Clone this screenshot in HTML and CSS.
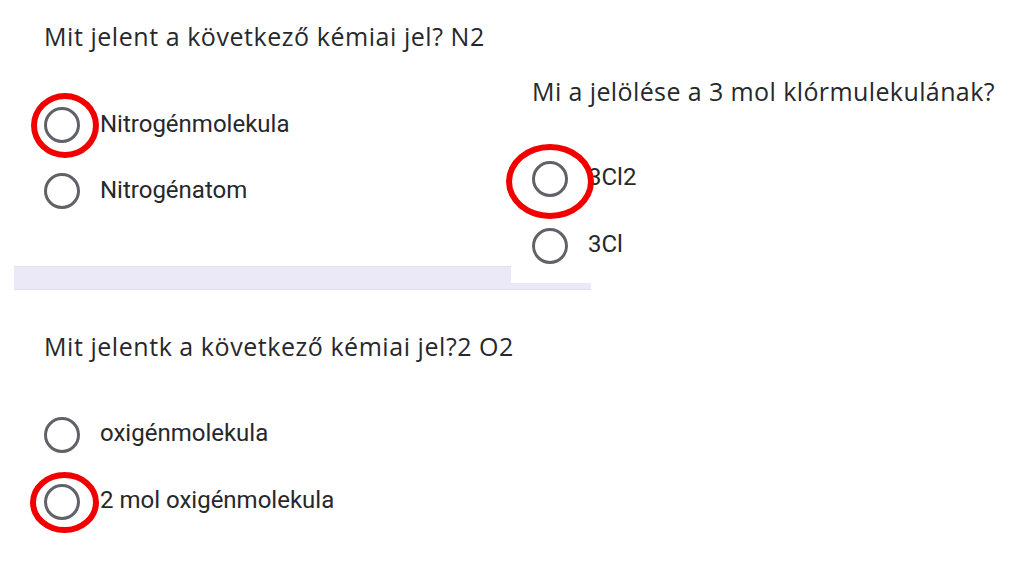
FILE: index.html
```html
<!DOCTYPE html>
<html lang="hu">
<head>
<meta charset="utf-8">
<title>Kémia kvíz</title>
<link rel="stylesheet" href="styles.css">
</head>
<body>
<div class="page">
  <section class="card card-first">
    <div class="question">Mit jelent a következő kémiai jel? N2</div>
    <div class="options">
      <div class="option"><span class="radio"></span><span class="label">Nitrogénmolekula</span></div>
      <div class="option"><span class="radio"></span><span class="label">Nitrogénatom</span></div>
    </div>
  </section>
  <div class="band"></div>
  <section class="card card-third">
    <div class="question">Mit jelentk a következő kémiai jel?2 O2</div>
    <div class="options">
      <div class="option option-tall"><span class="radio"></span><span class="label">oxigénmolekula</span></div>
      <div class="option option-tall"><span class="radio"></span><span class="label">2 mol oxigénmolekula</span></div>
    </div>
  </section>

  <section class="card card-overlay">
    <div class="question">Mi a jelölése a 3 mol klórmulekulának?</div>
    <div class="options">
      <div class="option option-tall"><span class="radio"></span><span class="label">3Cl2</span></div>
      <div class="option option-tall"><span class="radio"></span><span class="label">3Cl</span></div>
    </div>
  </section>

  <span class="mark mark-1"></span>
  <span class="mark mark-2"></span>
  <span class="mark mark-3"></span>
</div>
</body>
</html>
```

FILE: styles.css
```css
* { box-sizing: border-box; }
html, body {
  margin: 0;
  padding: 0;
  background: #ffffff;
}
.page {
  position: relative;
  width: 1024px;
  height: 574px;
  overflow: hidden;
  font-family: Roboto, "Liberation Sans", sans-serif;
  color: #202124;
}
.card {
  padding-left: 44px;
}
.card-first {
  padding-top: 21px;
}
.question {
  font-family: "Open Sans", Roboto, sans-serif;
  font-size: 25px;
  line-height: 30px;
  height: 30px;
  letter-spacing: 0.55px;
  color: #27282b;
  white-space: nowrap;
}
.options {
  display: flex;
  flex-direction: column;
  margin-top: 41px;
}
.option {
  display: flex;
  align-items: center;
  height: 66px;
  gap: 20px;
}
.option-tall {
  height: 67px;
}
.radio {
  width: 36px;
  height: 36px;
  border-radius: 50%;
  border: 3.5px solid #5f6368;
  flex: 0 0 auto;
}
.label {
  font-size: 24px;
  line-height: 28px;
  padding-bottom: 3px;
  color: #27282b;
  white-space: nowrap;
}
.band {
  margin-top: 42px;
  margin-left: 14px;
  width: 577px;
  height: 24px;
  background: #ebe9f7;
  border-top: 1px solid #e0dfe6;
  border-bottom: 1px solid #e0dfe6;
}
.card-third {
  padding-top: 41px;
}
.card-third .options {
  margin-top: 40px;
}
.card-overlay {
  position: absolute;
  left: 511px;
  top: 60px;
  width: 513px;
  height: 223px;
  background: #ffffff;
  padding-left: 21px;
  padding-top: 16px;
}
.card-overlay .question {
  letter-spacing: 0.4px;
}
.card-overlay .options {
  margin-top: 39px;
}
.mark {
  position: absolute;
  border: 6.5px solid #f20000;
  border-radius: 50%;
}
.mark-1 {
  left: 31px;
  top: 93px;
  width: 68px;
  height: 65px;
}
.mark-2 {
  left: 506px;
  top: 144px;
  width: 88px;
  height: 75px;
}
.mark-3 {
  left: 30px;
  top: 472px;
  width: 69px;
  height: 61px;
}
```
